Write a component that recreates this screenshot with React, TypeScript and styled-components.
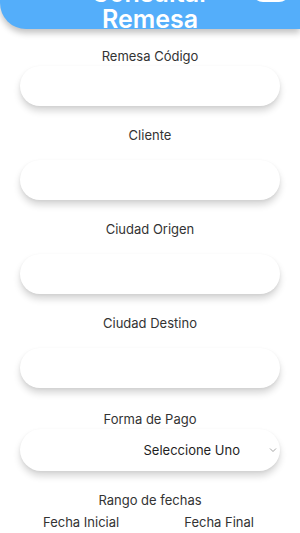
import styled, { createGlobalStyle } from "styled-components";

const GlobalStyle = createGlobalStyle`
  html, body {
    margin: 0;
    padding: 0;
    background: #ffffff;
  }

  body {
    font-family: Inter, "Open Sans", "Liberation Sans", sans-serif;
    color: #2b2b2b;
    overflow: hidden;
  }
`;

const Page = styled.main`
  width: 300px;
  min-height: 533px;
  background: #ffffff;
`;

// header is scrolled partly out of view, so it starts above the window
const Header = styled.header`
  display: grid;
  grid-template-columns: 1fr auto 1fr;
  align-items: end;
  height: 110px;
  margin-top: -81px;
  background: rgb(84, 174, 250);
  border-radius: 0 0 0 26px;
  box-shadow: 0 4px 6px rgba(0, 0, 0, 0.24);
  position: relative;
  z-index: 1;
`;

const BackButton = styled.div`
  justify-self: start;
  margin-left: 16px;
  margin-bottom: 25px;
  width: 22px;
  height: 22px;
  display: flex;
  align-items: center;
  justify-content: center;
`;

const Title = styled.h1`
  margin: 0 0 -3px;
  font-size: 25px;
  line-height: 26px;
  font-weight: 600;
  color: #ffffff;
  text-align: center;
`;

const HeaderButton = styled.div`
  justify-self: end;
  margin-right: 10px;
  margin-bottom: 27px;
  width: 38px;
  height: 22px;
  border-radius: 11px;
  background: #ffffff;
`;

const Form = styled.section`
  display: flex;
  flex-direction: column;
  padding-top: 19px;
`;

const Label = styled.div<{ $top?: number }>`
  margin-top: ${(p) => (p.$top ?? 21)}px;
  font-size: 13px;
  line-height: 16px;
  text-align: center;
  color: #333333;
`;

const InputBox = styled.input<{ $tight?: boolean }>`
  margin: ${(p) => (p.$tight ? "2px" : "17px")} 20px 0;
  height: 40px;
  box-sizing: border-box;
  border: none;
  outline: none;
  border-radius: 20px;
  background: #ffffff;
  padding: 0 18px;
  font: inherit;
  font-size: 14px;
  box-shadow: 0 5px 7px rgba(0, 0, 0, 0.16), 0 1px 3px rgba(0, 0, 0, 0.05);
`;

const SelectBox = styled.div`
  margin: 2px 20px 0;
  height: 42px;
  border-radius: 21px;
  background: #ffffff;
  display: flex;
  align-items: center;
  justify-content: flex-end;
  gap: 29px;
  padding-right: 3px;
  box-shadow: 0 5px 7px rgba(0, 0, 0, 0.16), 0 1px 3px rgba(0, 0, 0, 0.05);
`;

const SelectText = styled.span`
  font-size: 13px;
  color: #1f1f1f;
`;

const Chevron = styled.svg`
  width: 8px;
  height: 6px;
`;

const DateRow = styled.div`
  display: flex;
  justify-content: space-between;
  margin-top: 6px;
  padding: 0 46px 0 43px;
  font-size: 13px;
  line-height: 16px;
  color: #333333;
`;

const fields = ["Cliente", "Ciudad Origen", "Ciudad Destino"];

const App = () => {
  return (
    <Page>
      <GlobalStyle />
      <Header>
        <BackButton>
          <svg width="18" height="18" viewBox="0 0 24 24" fill="none" stroke="#fff" strokeWidth="2.5" strokeLinecap="round">
            <path d="M20 12H5M11 5l-7 7 7 7" />
          </svg>
        </BackButton>
        <Title>
          Consultar
          <br />
          Remesa
        </Title>
        <HeaderButton />
      </Header>

      <Form>
        <Label $top={0}>Remesa Código</Label>
        <InputBox $tight />

        {fields.map((f) => (
          <div key={f} style={{ display: "contents" }}>
            <Label>{f}</Label>
            <InputBox />
          </div>
        ))}

        <Label $top={23}>Forma de Pago</Label>
        <SelectBox>
          <SelectText>Seleccione Uno</SelectText>
          <Chevron viewBox="0 0 8 6" fill="none" stroke="#9a9a9a" strokeWidth="0.9">
            <path d="M1 1.5l3 3 3-3" />
          </Chevron>
        </SelectBox>

        <Label>Rango de fechas</Label>
        <DateRow>
          <span>Fecha Inicial</span>
          <span>Fecha Final</span>
        </DateRow>
      </Form>
    </Page>
  );
};

export default App;
